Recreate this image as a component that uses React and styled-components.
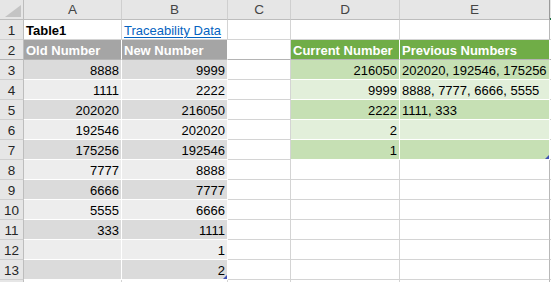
import React from 'react';
import styled, { createGlobalStyle, css } from 'styled-components';

const Global = createGlobalStyle`
  html, body { margin: 0; padding: 0; background: #ffffff; }
  body { font-family: "Liberation Sans", Arial, sans-serif; overflow: hidden; }
`;

const GRID = '#d4d4d4';
const HEAD_BG = '#e6e6e6';
const HEAD_LINE = '#bdbdbd';

const Sheet = styled.div`
  display: grid;
  grid-template-columns: 24px 98px 106px 63px 109px 150px 1fr;
  grid-auto-rows: 20px;
  width: 551px;
  height: 282px;
  overflow: hidden;
  font-size: 13px;
  color: #000;
`;

const Corner = styled.div`
  position: relative;
  background: ${HEAD_BG};
  border-right: 1px solid ${HEAD_LINE};
  border-bottom: 1px solid ${HEAD_LINE};
  &::after {
    content: '';
    position: absolute;
    right: 2px;
    bottom: 2px;
    width: 0;
    height: 0;
    border-left: 16px solid transparent;
    border-bottom: 12px solid #c4c4c4;
  }
`;

const ColHead = styled.div`
  position: relative;
  background: ${HEAD_BG};
  border-right: 1px solid ${(p) => (p.$edge ? '#9a9a9a' : '#cfcfcf')};
  border-bottom: 1px solid ${HEAD_LINE};
  display: flex;
  align-items: center;
  justify-content: center;
  color: #444;
  font-size: 13.5px;
  line-height: 15px;
  ${(p) =>
    p.$active &&
    css`
      border-bottom: 2px solid #217346;
      border-right: none;
    `}
`;

const RowHead = styled.div`
  background: ${HEAD_BG};
  border-right: 1px solid ${HEAD_LINE};
  border-bottom: 1px solid ${(p) => (p.$freeze ? '#b4b4b4' : '#cfcfcf')};
  display: flex;
  align-items: flex-end;
  justify-content: center;
  padding-bottom: 1px;
  color: #262626;
  font-size: 13.5px;
  line-height: 15px;
`;

const fills = {
  none: { bg: '#ffffff', line: GRID },
  grayHead: { bg: '#a5a5a5', line: '#ffffff' },
  grayDark: { bg: '#dbdbdb', line: '#ffffff' },
  grayLight: { bg: '#ededed', line: '#ffffff' },
  greenHead: { bg: '#70ad47', line: '#ffffff' },
  greenDark: { bg: '#c6e0b4', line: '#ffffff' },
  greenLight: { bg: '#e2efda', line: '#ffffff' },
};

const Cell = styled.div`
  position: relative;
  box-sizing: border-box;
  min-width: 0;
  background: ${(p) => fills[p.$fill].bg};
  border-right: 1px solid ${(p) => (p.$edge ? '#b8b8b8' : fills[p.$fill].line)};
  border-bottom: 1px solid ${(p) => (p.$freeze ? '#b4b4b4' : fills[p.$fill].line)};
  display: flex;
  align-items: flex-end;
  justify-content: ${(p) => (p.$right ? 'flex-end' : 'flex-start')};
  padding: 0 2px 1px 2px;
  line-height: 15px;
  white-space: nowrap;
  overflow: visible;
  font-weight: ${(p) => (p.$bold ? 700 : 400)};
  color: ${(p) => (p.$light ? '#ffffff' : '#000000')};
`;

const Link = styled.span`
  color: #0563c1;
  text-decoration: underline;
  text-underline-offset: 2px;
`;

const Handle = styled.span`
  position: absolute;
  right: 0;
  bottom: 0;
  width: 0;
  height: 0;
  border-left: 4px solid transparent;
  border-bottom: 4px solid #3f51b5;
`;

const grayData = [
  [8888, 9999],
  [1111, 2222],
  [202020, 216050],
  [192546, 202020],
  [175256, 192546],
  [7777, 8888],
  [6666, 7777],
  [5555, 6666],
  [333, 1111],
  ['', 1],
  ['', 2],
];

const greenData = [
  [216050, '202020, 192546, 175256'],
  [9999, '8888, 7777, 6666, 5555'],
  [2222, '1111, 333'],
  [2, ''],
  [1, ''],
];

export default function App() {
  const rows = [];

  rows.push(
    <React.Fragment key="r1">
      <RowHead>1</RowHead>
      <Cell $fill="none" $bold>Table1</Cell>
      <Cell $fill="none"><Link>Traceability Data</Link></Cell>
      <Cell $fill="none" />
      <Cell $fill="none" />
      <Cell $fill="none" $edge />
      <Cell $fill="none" />
    </React.Fragment>
  );

  rows.push(
    <React.Fragment key="r2">
      <RowHead $freeze>2</RowHead>
      <Cell $fill="grayHead" $bold $light $freeze>Old Number</Cell>
      <Cell $fill="grayHead" $bold $light $freeze>New Number</Cell>
      <Cell $fill="none" $freeze />
      <Cell $fill="greenHead" $bold $light $freeze>Current Number</Cell>
      <Cell $fill="greenHead" $bold $light $freeze>Previous Numbers</Cell>
      <Cell $fill="none" $freeze />
    </React.Fragment>
  );

  grayData.forEach(([a, b], i) => {
    const r = i + 3;
    const dark = r % 2 === 1;
    const g = greenData[i];
    const gFill = dark ? 'greenDark' : 'greenLight';
    rows.push(
      <React.Fragment key={`r${r}`}>
        <RowHead>{r}</RowHead>
        <Cell $fill={dark ? 'grayDark' : 'grayLight'} $right>{a}</Cell>
        <Cell $fill={dark ? 'grayDark' : 'grayLight'} $right>
          {b}
          {r === 13 && <Handle />}
        </Cell>
        <Cell $fill="none" />
        {g ? (
          <>
            <Cell $fill={gFill} $right>{g[0]}</Cell>
            <Cell $fill={gFill}>
              {g[1]}
              {r === 7 && <Handle />}
            </Cell>
          </>
        ) : (
          <>
            <Cell $fill="none" />
            <Cell $fill="none" $edge />
          </>
        )}
        <Cell $fill="none" />
      </React.Fragment>
    );
  });

  rows.push(
    <React.Fragment key="r14">
      <RowHead />
      <Cell $fill="none" />
      <Cell $fill="none" />
      <Cell $fill="none" />
      <Cell $fill="none" />
      <Cell $fill="none" $edge />
      <Cell $fill="none" />
    </React.Fragment>
  );

  return (
    <>
      <Global />
      <Sheet>
        <Corner />
        <ColHead>A</ColHead>
        <ColHead>B</ColHead>
        <ColHead>C</ColHead>
        <ColHead>D</ColHead>
        <ColHead $edge>E</ColHead>
        <ColHead $active />
        {rows}
      </Sheet>
    </>
  );
}
